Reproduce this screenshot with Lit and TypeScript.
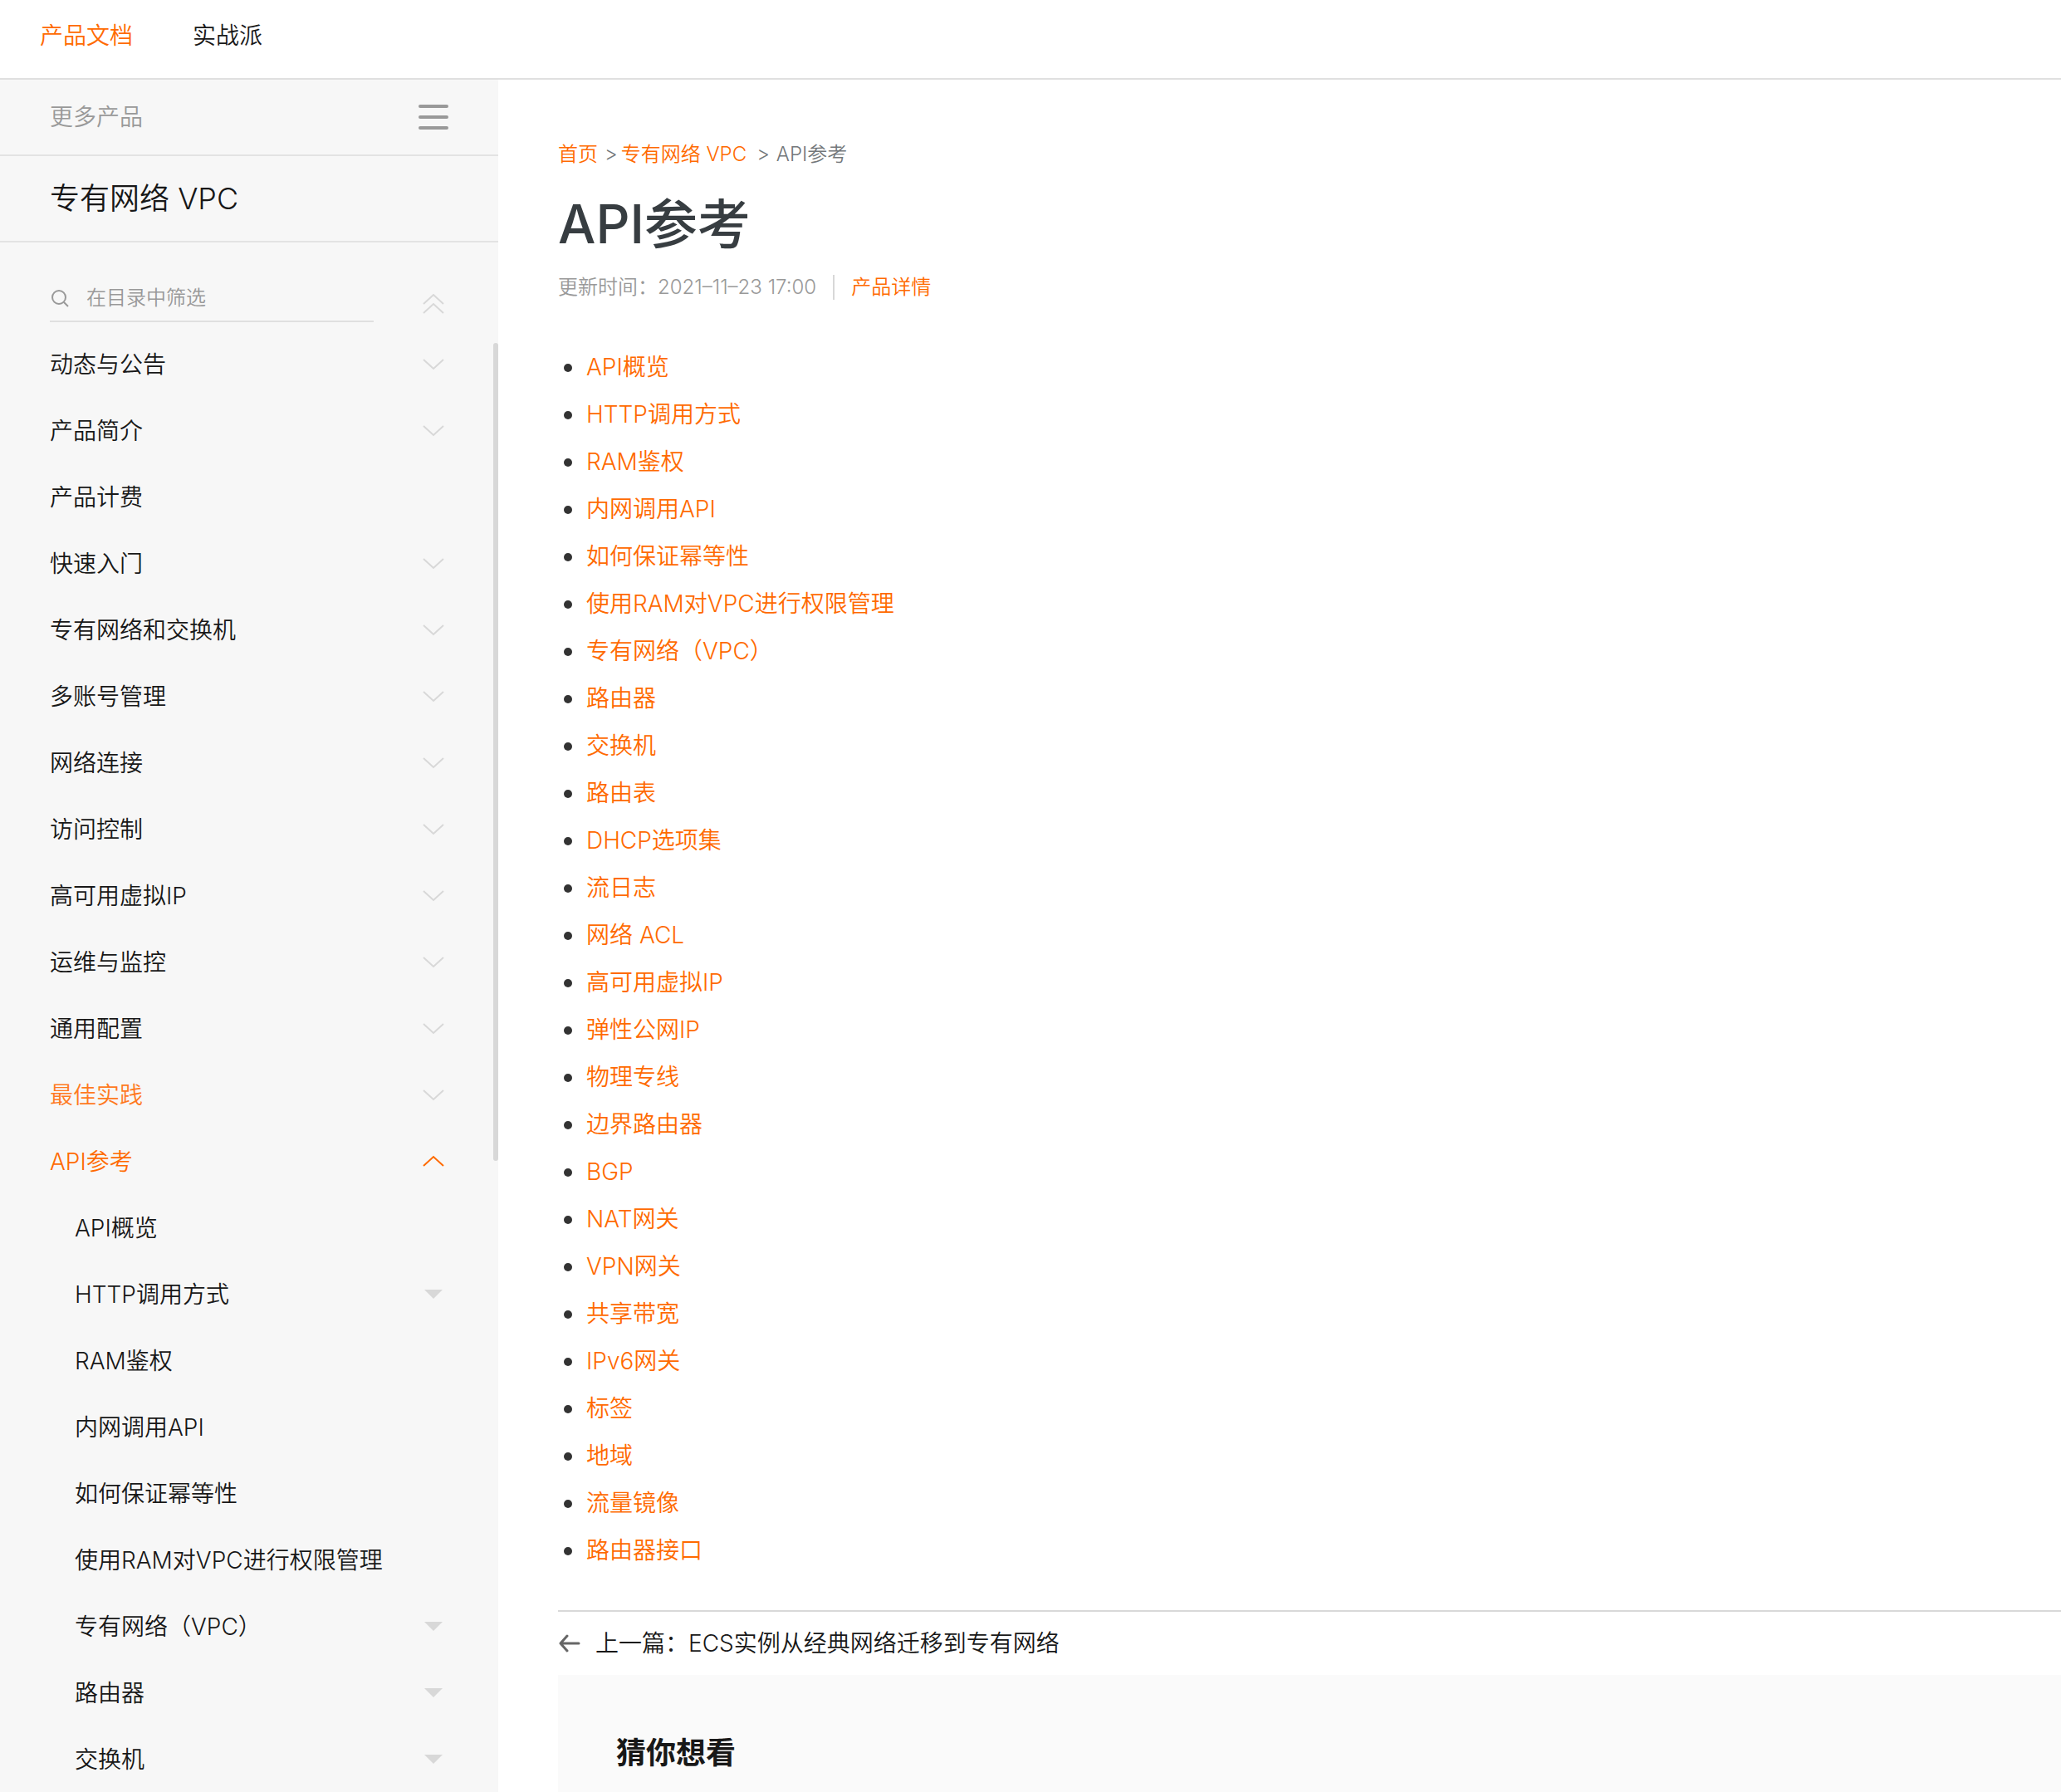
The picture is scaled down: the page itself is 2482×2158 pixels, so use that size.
import { LitElement, html, css, svg, nothing } from "lit";
import { customElement, property, state } from "lit/decorators.js";

interface MenuItem {
  label: string;
  mark?: "down" | "up" | "caret";
  tone?: "hot" | "active";
  child?: boolean;
}

const MENU: MenuItem[] = [
  { label: "动态与公告", mark: "down" },
  { label: "产品简介", mark: "down" },
  { label: "产品计费" },
  { label: "快速入门", mark: "down" },
  { label: "专有网络和交换机", mark: "down" },
  { label: "多账号管理", mark: "down" },
  { label: "网络连接", mark: "down" },
  { label: "访问控制", mark: "down" },
  { label: "高可用虚拟IP", mark: "down" },
  { label: "运维与监控", mark: "down" },
  { label: "通用配置", mark: "down" },
  { label: "最佳实践", mark: "down", tone: "hot" },
  { label: "API参考", mark: "up", tone: "active" },
  { label: "API概览", child: true },
  { label: "HTTP调用方式", mark: "caret", child: true },
  { label: "RAM鉴权", child: true },
  { label: "内网调用API", child: true },
  { label: "如何保证幂等性", child: true },
  { label: "使用RAM对VPC进行权限管理", child: true },
  { label: "专有网络（VPC）", mark: "caret", child: true },
  { label: "路由器", mark: "caret", child: true },
  { label: "交换机", mark: "caret", child: true },
];

const TOPICS = [
  "API概览", "HTTP调用方式", "RAM鉴权", "内网调用API", "如何保证幂等性",
  "使用RAM对VPC进行权限管理", "专有网络（VPC）", "路由器", "交换机", "路由表",
  "DHCP选项集", "流日志", "网络 ACL", "高可用虚拟IP", "弹性公网IP", "物理专线",
  "边界路由器", "BGP", "NAT网关", "VPN网关", "共享带宽", "IPv6网关", "标签",
  "地域", "流量镜像", "路由器接口",
];

const GLYPHS = {
  down: svg`<path d="M1 7L13 18L25 7" fill="none" stroke="currentColor" stroke-width="2"/>`,
  up: svg`<path d="M1 18L13 7L25 18" fill="none" stroke="currentColor" stroke-width="2"/>`,
  caret: svg`<path d="M2 7H24L13 18Z" fill="currentColor"/>`,
  collapse: svg`<path d="M1 13L13 2L25 13M1 24L13 13L25 24" fill="none" stroke="currentColor" stroke-width="2"/>`,
};

@customElement("doc-glyph")
export class DocGlyph extends LitElement {
  static styles = css`
    :host { display: block; flex: none; }
    .glyph { display: block; }
  `;

  @property() name: keyof typeof GLYPHS = "down";

  render() {
    return html`<svg class="glyph" width="26" height="26" viewBox="0 0 26 26" aria-hidden="true">${GLYPHS[this.name]}</svg>`;
  }
}

@customElement("doc-sidebar")
export class DocSidebar extends LitElement {
  static styles = css`
    :host {
      display: block;
      position: relative;
      background: #f7f7f7;
      color: #181818;
      font-size: 28px;
      line-height: 40px;
    }
    .more, .product {
      display: flex;
      align-items: center;
      justify-content: space-between;
      padding: 0 60px;
      border-bottom: 2px solid #e3e3e3;
    }
    .more { height: 90px; color: #999; }
    .product { height: 102px; }
    .name { margin: 0; font-size: 36px; font-weight: inherit; line-height: 48px; }
    .icon-button {
      display: block;
      padding: 0;
      border: 0;
      background: none;
      color: #d8d8d8;
      cursor: pointer;
    }
    .bars { display: block; color: #999; }
    .filter {
      display: flex;
      align-items: flex-end;
      justify-content: space-between;
      padding: 40px 65px 10px 60px;
    }
    .field {
      display: flex;
      align-items: center;
      gap: 19px;
      width: 390px;
      height: 54px;
      border-bottom: 2px solid #e0e0e0;
      color: #999;
    }
    .collapse { padding-bottom: 9px; }
    .lens { display: block; flex: none; }
    .query {
      flex: 1;
      min-width: 0;
      padding: 0;
      border: 0;
      outline: 0;
      background: none;
      color: #333;
      font: inherit;
      font-size: 24px;
      line-height: 36px;
    }
    .query::placeholder { color: #999; opacity: 1; }
    .menu { margin: 0; padding: 0; list-style: none; }
    .row {
      display: flex;
      align-items: center;
      justify-content: space-between;
      box-sizing: border-box;
      height: 80px;
      padding: 2px 65px 0 60px;
    }
    .child { padding-left: 90px; }
    .entry { color: inherit; text-decoration: none; }
    .hot { color: #ff7a1f; }
    .active { color: #ff6a00; }
    .mark { color: #d8d8d8; }
    .active .mark { color: #ff6a00; }
    .thumb {
      position: absolute;
      top: 317px;
      right: 0;
      width: 6px;
      height: 985px;
      border-radius: 3px;
      background: #d8d8d8;
    }
  `;

  @state() private query = "";

  render() {
    const rows = MENU.filter((m) => m.label.includes(this.query));
    return html`
      <div class="more">
        <span>更多产品</span>
        <button class="icon-button" type="button" aria-label="更多产品">
          <svg class="bars" width="36" height="30" viewBox="0 0 36 30" aria-hidden="true">
            <path d="M2 2H34M2 15H34M2 28H34" stroke="currentColor" stroke-width="4" stroke-linecap="round" />
          </svg>
        </button>
      </div>
      <div class="product"><h2 class="name">专有网络 VPC</h2></div>
      <div class="filter">
        <label class="field">
          <svg class="lens" width="25" height="26" viewBox="0 0 25 26" aria-hidden="true">
            <circle cx="11" cy="12" r="8" fill="none" stroke="currentColor" stroke-width="2" />
            <path d="M17 18L22 23" stroke="currentColor" stroke-width="2" />
          </svg>
          <input
            class="query"
            type="text"
            placeholder="在目录中筛选"
            aria-label="在目录中筛选"
            .value=${this.query}
            @input=${(e: Event) => (this.query = (e.target as HTMLInputElement).value)}
          />
        </label>
        <button class="icon-button collapse" type="button" aria-label="全部收起"><doc-glyph name="collapse"></doc-glyph></button>
      </div>
      <ul class="menu">
        ${rows.map(
          (m) => html`<li class="row ${m.child ? "child" : ""} ${m.tone ?? ""}">
            <a class="entry" href="#">${m.label}</a>
            ${m.mark ? html`<doc-glyph class="mark" name=${m.mark}></doc-glyph>` : nothing}
          </li>`
        )}
      </ul>
      <div class="thumb"></div>
    `;
  }
}

@customElement("doc-article")
export class DocArticle extends LitElement {
  static styles = css`
    :host {
      display: flex;
      flex-direction: column;
      min-width: 0;
      padding: 70px 0 0 72px;
      font-size: 28px;
    }
    a { color: #ff6a00; text-decoration: none; }
    .crumbs {
      display: flex;
      gap: 4px;
      color: #73777a;
      font-size: 24px;
      line-height: 40px;
    }
    .sep { padding-left: 4px; }
    .parent { padding-right: 4px; }
    .here { padding-left: 4px; }
    .title {
      margin: 22px 0 0;
      color: #373d41;
      font-size: 64px;
      font-weight: 500;
      line-height: 84px;
    }
    .meta {
      display: flex;
      align-items: center;
      margin-top: 19px;
      color: #999;
      font-size: 24px;
      line-height: 30px;
    }
    .detail {
      margin-left: 20px;
      padding-left: 20px;
      border-left: 2px solid #d8d8d8;
    }
    .topics {
      margin: 59px 0 37px;
      padding: 0;
      list-style: none;
    }
    .topic {
      display: flex;
      align-items: center;
      gap: 17px;
      margin-bottom: 12px;
      padding-left: 7px;
      line-height: 45px;
    }
    .topic::before {
      content: "";
      width: 10px;
      height: 10px;
      border-radius: 50%;
      background: #333;
    }
    .pager {
      display: flex;
      align-items: center;
      height: 76px;
      border-top: 2px solid #d8d8d8;
    }
    .prev {
      display: flex;
      align-items: center;
      gap: 18px;
      color: #181818;
      line-height: 40px;
    }
    .arrow { display: block; color: #666; }
    .related {
      flex: 1;
      padding: 70px 70px 0;
      background: #fafafa;
      color: #181818;
    }
    .heading { margin: 0; font-size: 36px; font-weight: 600; line-height: 48px; }
  `;

  render() {
    return html`
      <nav class="crumbs" aria-label="面包屑">
        <a href="#">首页</a><span class="sep">&gt;</span><a class="parent" href="#">专有网络 VPC</a><span class="sep">&gt;</span><span class="here">API参考</span>
      </nav>
      <h1 class="title">API参考</h1>
      <div class="meta">
        <span>更新时间：2021–11–23 17:00</span>
        <a class="detail" href="#">产品详情</a>
      </div>
      <ul class="topics">
        ${TOPICS.map((t) => html`<li class="topic"><a href="#">${t}</a></li>`)}
      </ul>
      <div class="pager">
        <a class="prev" href="#">
          <svg class="arrow" width="27" height="22" viewBox="0 0 27 22" aria-hidden="true">
            <path d="M11 2L3 11L11 20M3 11H25" fill="none" stroke="currentColor" stroke-width="3" stroke-linecap="round" stroke-linejoin="round" />
          </svg>
          <span>上一篇：ECS实例从经典网络迁移到专有网络</span>
        </a>
      </div>
      <section class="related"><h2 class="heading">猜你想看</h2></section>
    `;
  }
}

@customElement("app-root")
export class AppRoot extends LitElement {
  static styles = css`
    :host {
      display: flex;
      flex-direction: column;
      min-height: 100vh;
      background: #fff;
      font-family: Inter, "Noto Sans CJK SC", sans-serif;
      font-weight: 350;
    }
    .tabs {
      display: flex;
      gap: 72px;
      height: 94px;
      padding: 0 48px;
      border-bottom: 2px solid #e0e0e0;
      font-size: 28px;
      line-height: 86px;
    }
    .tab { color: #181818; text-decoration: none; }
    .current { color: #ff6a00; }
    .page {
      display: grid;
      grid-template-columns: 600px minmax(0, 1fr);
      flex: 1;
    }
  `;

  render() {
    return html`
      <nav class="tabs" aria-label="文档">
        <a class="tab current" href="#">产品文档</a>
        <a class="tab" href="#">实战派</a>
      </nav>
      <div class="page">
        <doc-sidebar></doc-sidebar>
        <doc-article></doc-article>
      </div>
    `;
  }
}
